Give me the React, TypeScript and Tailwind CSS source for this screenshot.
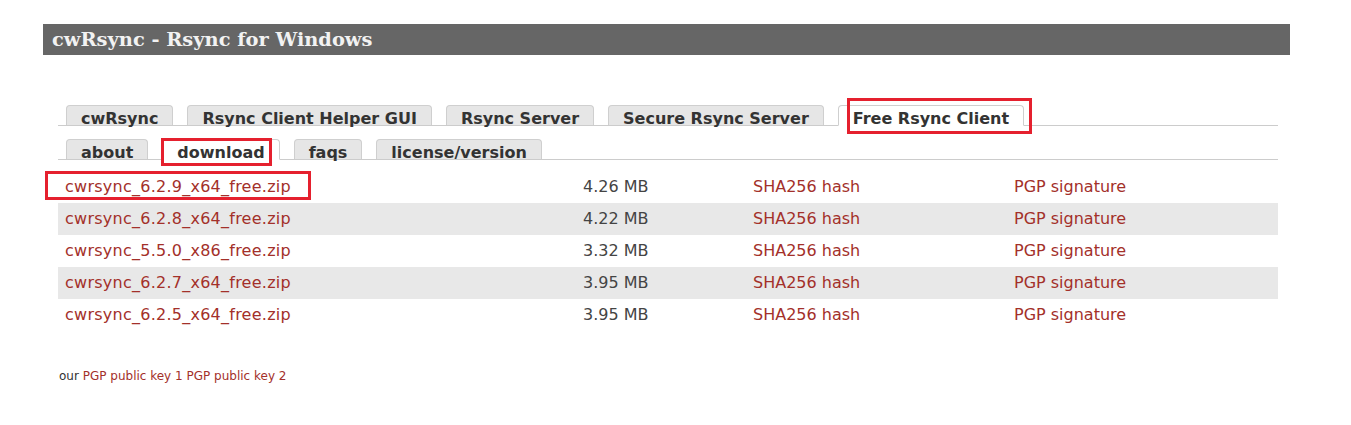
const TOP_TABS = [
  { label: 'cwRsync' },
  { label: 'Rsync Client Helper GUI' },
  { label: 'Rsync Server' },
  { label: 'Secure Rsync Server' },
  { label: 'Free Rsync Client', active: true },
]

const SUB_TABS = [
  { label: 'about' },
  { label: 'download', active: true },
  { label: 'faqs' },
  { label: 'license/version' },
]

const FILES = [
  { name: 'cwrsync_6.2.9_x64_free.zip', size: '4.26 MB' },
  { name: 'cwrsync_6.2.8_x64_free.zip', size: '4.22 MB' },
  { name: 'cwrsync_5.5.0_x86_free.zip', size: '3.32 MB' },
  { name: 'cwrsync_6.2.7_x64_free.zip', size: '3.95 MB' },
  { name: 'cwrsync_6.2.5_x64_free.zip', size: '3.95 MB' },
]

function Tab({ label, active }: { label: string; active?: boolean }) {
  return (
    <div
      className={`px-[14px] pt-[5px] rounded-t-[4px] border border-[#cfcfcf] text-[16px] font-bold leading-[15px] text-[#333] ${
        active ? 'bg-white border-b-white mb-[-1px] h-[21px]' : 'bg-[#e6e6e6] border-b-0 h-[20px]'
      }`}
    >
      {label}
    </div>
  )
}

export default function App() {
  return (
    <div className="relative min-h-[425px] bg-white font-['DejaVu_Sans',Verdana,sans-serif]">
      <div className="ml-[43px] w-[1247px] pt-[24px]">
        {/* Header */}
        <div className="h-[31px] bg-[#666] flex items-center pl-[9px]">
          <h1 className="text-[19.4px] font-bold text-[#f2f2f2] font-['DejaVu_Serif',Georgia,serif] leading-none">
            cwRsync - Rsync for Windows
          </h1>
        </div>

        {/* Top tabs */}
        <div className="ml-[15px] w-[1220px] mt-[50px] pl-[8px] flex items-end gap-[14px] border-b border-[#cccccc]">
          {TOP_TABS.map(t => (
            <Tab key={t.label} label={t.label} active={t.active} />
          ))}
        </div>

        {/* Sub tabs */}
        <div className="ml-[15px] w-[1220px] mt-[13px] pl-[8px] flex items-end gap-[14px] border-b border-[#cccccc]">
          {SUB_TABS.map(t => (
            <Tab key={t.label} label={t.label} active={t.active} />
          ))}
        </div>

        {/* Downloads */}
        <div className="ml-[15px] w-[1220px] mt-[11px] text-[16px]">
          {FILES.map((f, i) => (
            <div
              key={f.name}
              className={`h-[32px] grid grid-cols-[518px_170px_261px_1fr] items-center px-[7px] ${
                i % 2 === 1 ? 'bg-[#e8e8e8]' : ''
              }`}
            >
              <span className="text-[#a3302a] tracking-[0.25px]">{f.name}</span>
              <span className="text-[#444]">{f.size}</span>
              <span className="text-[#a3302a]">SHA256 hash</span>
              <span className="text-[#a3302a]">PGP signature</span>
            </div>
          ))}
        </div>

        {/* Footer */}
        <p className="ml-[16px] mt-[36px] text-[12px] text-[#333]">
          our <span className="text-[#a3302a]">PGP public key 1</span>{' '}
          <span className="text-[#a3302a]">PGP public key 2</span>
        </p>
      </div>

      {/* Annotation boxes */}
      <div className="absolute left-[847px] top-[98px] w-[185px] h-[36px] border-[3px] border-[#e5202e]" />
      <div className="absolute left-[161px] top-[138px] w-[111px] h-[28px] border-[3px] border-[#e5202e]" />
      <div className="absolute left-[45px] top-[171px] w-[266px] h-[29px] border-[3px] border-[#e5202e]" />
    </div>
  )
}
